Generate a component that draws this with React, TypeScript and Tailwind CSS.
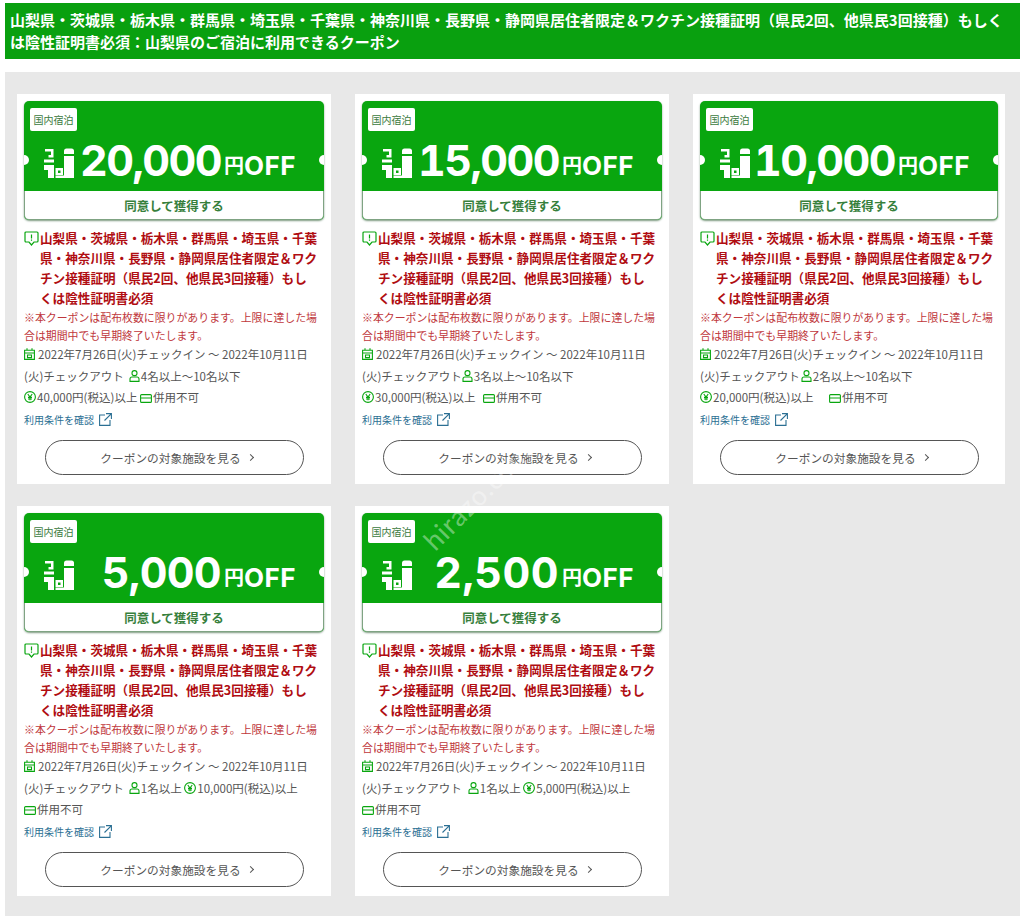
const CJK = "font-['Noto_Sans_CJK_JP','Noto_Sans',sans-serif]";

type Coupon = {
  amount: string;
  tracking: string;
  people: string;
  minimum: string;
  peopleGap: string;
  ticketGap: string;
};

const coupons: Coupon[] = [
  { amount: "20,000", tracking: "tracking-[-1.6px]", people: "4名以上～10名以下", minimum: "40,000円(税込)以上", peopleGap: "ml-[5px]", ticketGap: "ml-0" },
  { amount: "15,000", tracking: "tracking-[-1.6px]", people: "3名以上～10名以下", minimum: "30,000円(税込)以上", peopleGap: "ml-0", ticketGap: "ml-[5px]" },
  { amount: "10,000", tracking: "tracking-[-1.6px]", people: "2名以上～10名以下", minimum: "20,000円(税込)以上", peopleGap: "ml-[1px]", ticketGap: "ml-[13px]" },
  { amount: "5,000", tracking: "tracking-[-0.7px]", people: "1名以上", minimum: "10,000円(税込)以上", peopleGap: "ml-[5px]", ticketGap: "ml-0" },
  { amount: "2,500", tracking: "tracking-[0.4px]", people: "1名以上", minimum: "5,000円(税込)以上", peopleGap: "ml-[6px]", ticketGap: "ml-0" },
];

function TicketLogo() {
  return (
    <svg width="31" height="31" viewBox="0 0 31 31" fill="#fff" className="mt-[6px] shrink-0">
      <path d="M1 1h8.5v8.5H4.5V7h2.5V3.5H1z" />
      <path d="M0 11.5h10v3H0z" />
      <path d="M20 3a2.5 2.5 0 0 1 2.5-2.5h5A2.5 2.5 0 0 1 30 3v3H20z" />
      <path d="M20 8h10v22H11.5v-2.5H20z" />
      <path fillRule="evenodd" d="M11.5 20H19v7h-7.5zM14 22.5v2.5h2.5v-2.5z" />
      <path d="M0 17h10v13H4v-8H0z" />
    </svg>
  );
}

function AlertIcon() {
  return (
    <svg width="15" height="15" viewBox="0 0 15 15" fill="none" stroke="#09a60f" strokeWidth="1.2" className="absolute left-0 top-[3px]">
      <path d="M2 1h11a1 1 0 0 1 1 1v8a1 1 0 0 1-1 1h-3l-2.5 3L5 11H2a1 1 0 0 1-1-1V2a1 1 0 0 1 1-1z" />
      <path d="M7.5 3.5v4M7.5 8.5v1.2" />
    </svg>
  );
}

function CalendarIcon() {
  return (
    <svg width="11" height="12" viewBox="0 0 11 12" fill="none" stroke="#09a60f" strokeWidth="1.1" className="mr-[3px] inline-block align-[-1px]">
      <path d="M.6 2.2h9.8v9.2H.6zM.6 5h9.8M3 .2v2.6M8 .2v2.6M3.5 7h4v2.6h-4z" />
    </svg>
  );
}

function PersonIcon() {
  return (
    <svg width="11" height="12" viewBox="0 0 11 12" fill="none" stroke="#09a60f" strokeWidth="1.1" className="mr-px inline-block align-[-1px]">
      <rect x="3" y=".6" width="5" height="5" rx="2.4" />
      <path d="M1 11.4V9a2 2 0 0 1 2-2h5a2 2 0 0 1 2 2v2.4z" />
    </svg>
  );
}

function YenIcon() {
  return (
    <svg width="12" height="12" viewBox="0 0 12 12" fill="none" stroke="#09a60f" strokeWidth="1.1" className="mr-px inline-block align-[-1px]">
      <circle cx="6" cy="6" r="5.4" />
      <path d="M3.8 3l2.2 3 2.2-3M6 6v3.2M4 6.4h4M4 8h4" />
    </svg>
  );
}

function TicketIcon() {
  return (
    <svg width="12" height="9" viewBox="0 0 12 9" fill="none" stroke="#09a60f" strokeWidth="1.1" className="mr-px inline-block">
      <path d="M1.6.6h8.8a1 1 0 0 1 1 1v5.8a1 1 0 0 1-1 1H1.6a1 1 0 0 1-1-1V1.6a1 1 0 0 1 1-1zM.6 4h10.8" />
    </svg>
  );
}

function LinkIcon() {
  return (
    <svg width="13" height="13" viewBox="0 0 13 13" fill="none" stroke="#2b6f93" strokeWidth="1.1" className="ml-[5px] inline-block align-[-2px]">
      <path d="M6 2H.6v10.4H11V7M7 .6h5.4V6M12.2.8L5.5 7.5" />
    </svg>
  );
}

function CouponCard({ coupon }: { coupon: Coupon }) {
  return (
    <div className="flex h-[390px] flex-col bg-white px-[7px] pt-[7px]">
      <div className="relative h-[119px] overflow-hidden rounded-[5px] bg-[#09a60f] shadow-[0_1px_2px_#7d9a80]">
        <span className="absolute left-[-5px] top-[54px] size-[10px] rounded-full bg-white" />
        <span className="absolute right-[-5px] top-[54px] size-[10px] rounded-full bg-white" />
        <div className="h-[90px] pl-[6px] pt-[7px]">
          <span className="flex h-[23px] w-[47px] items-center justify-center rounded-[2px] bg-white text-[10px] text-[#3b7a3e]">
            国内宿泊
          </span>
          <div className="ml-[14px] mr-[28px] mt-[9px] flex h-[40px] items-center text-white">
            <TicketLogo />
            <span className={`${coupon.tracking} ml-auto font-['Inter',sans-serif] text-[43px] font-bold tabular-nums`}>{coupon.amount}</span>
            <span className="ml-[3px] mt-[10px] text-[20px] font-bold">円</span>
            <span className="mt-[11px] font-['Inter',sans-serif] text-[26px] font-bold tracking-[0.5px]">OFF</span>
          </div>
        </div>
        <div className="flex h-[29px] items-center justify-center rounded-b-[5px] border-x border-b border-[#7fa383] bg-white pt-[2px] text-[12.5px] font-bold text-[#37803c]">
          同意して獲得する
        </div>
      </div>

      <p className="relative mt-[8px] pl-[16px] text-[12.6px] font-bold leading-[20px] text-[#b00d12]">
        <AlertIcon />
        山梨県・茨城県・栃木県・群馬県・埼玉県・千葉県・神奈川県・長野県・静岡県居住者限定＆ワクチン接種証明（県民2回、他県民3回接種）もし
        <span className="inline-block">くは陰性証明書必須</span>
      </p>
      <p className="text-[10.9px] leading-[18px] text-[#c0373c]">
        ※本クーポンは配布枚数に限りがあります。上限に達した場合は期間中でも早期終了いたします。
      </p>
      <p className="text-[11.5px] leading-[21.5px] text-[#555]">
        <CalendarIcon />
        2022年7月26日(火)チェックイン ～ 2022年10月11日
        <span className="inline-block whitespace-nowrap">(火)チェックアウト</span>
        <span className={`${coupon.peopleGap} inline-block whitespace-nowrap`}>
          <PersonIcon />
          {coupon.people}
        </span>{" "}
        <span className="inline-block whitespace-nowrap">
          <YenIcon />
          {coupon.minimum}
        </span>{" "}
        <span className={`${coupon.ticketGap} inline-block whitespace-nowrap`}>
          <TicketIcon />
          併用不可
        </span>
      </p>
      <p className="mt-px text-[10px] leading-[20px] text-[#2b6f93]">
        利用条件を確認
        <LinkIcon />
      </p>
      <div className="mx-auto mb-[9px] mt-auto flex h-[35px] w-[259px] items-center justify-center gap-[7px] rounded-full border border-[#555] pl-[5px] text-[11.7px] text-[#555]">
        クーポンの対象施設を見る
        <span className="size-[5px] rotate-45 border-r border-t border-[#555]" />
      </div>
    </div>
  );
}

export default function App() {
  return (
    <div className={`relative h-[919px] overflow-hidden bg-white pl-[5px] pr-1 pt-[3px] ${CJK}`}>
      <h1 className="h-[56px] bg-[#09a00f] px-[5px] pt-[6px] text-[15px] font-bold leading-[22px] text-white">
        山梨県・茨城県・栃木県・群馬県・埼玉県・千葉県・神奈川県・長野県・静岡県居住者限定＆ワクチン接種証明（県民2回、他県民3回接種）もしくは陰性証明書必須：山梨県のご宿泊に利用できるクーポン
      </h1>
      <div className="mt-[13px] grid h-[844px] grid-cols-[314px_314px_312px] content-start gap-x-[24px] gap-y-[22px] bg-[#e8e8e8] pl-[12px] pt-[22px]">
        {coupons.map((coupon) => (
          <CouponCard key={coupon.amount} coupon={coupon} />
        ))}
      </div>
      <span className="absolute left-[408px] top-[476px] origin-center -rotate-45 font-['Lato',sans-serif] text-[27px] tracking-[1px] text-white/40">
        hirazo.com
      </span>
    </div>
  );
}
